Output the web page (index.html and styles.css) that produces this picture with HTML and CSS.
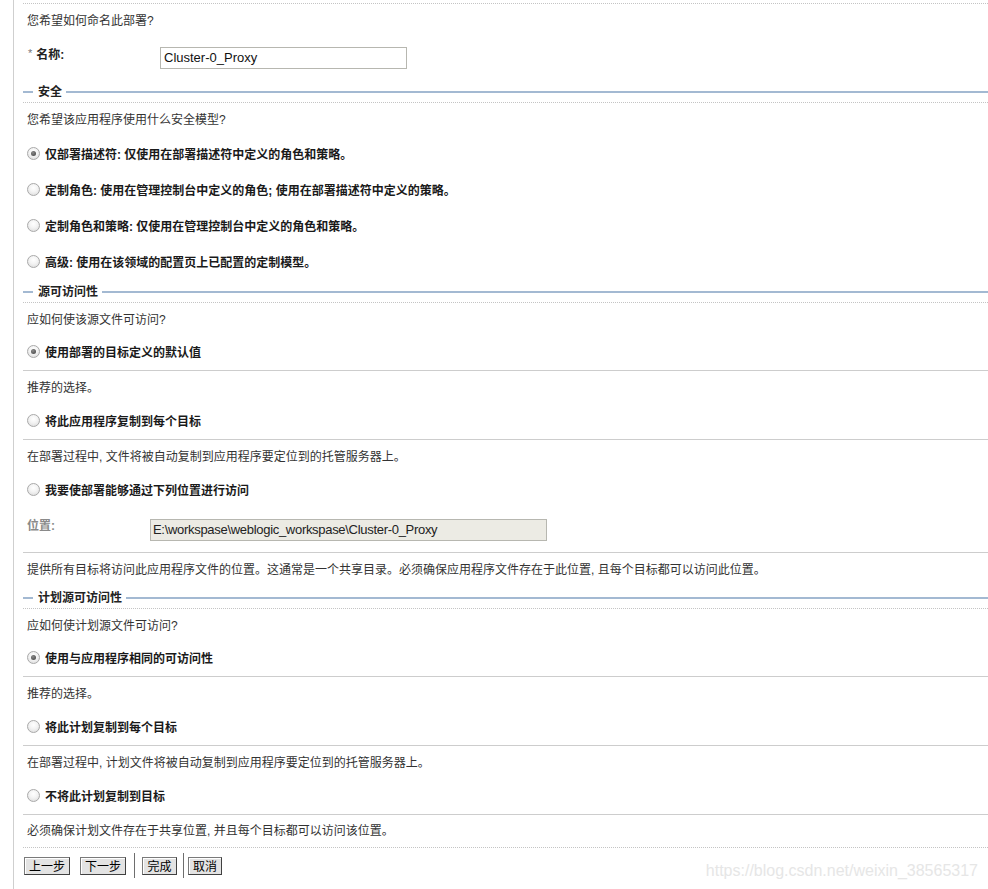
FILE: index.html
```html
<!DOCTYPE html>
<html lang="zh-CN">
<head>
<meta charset="utf-8">
<title>部署</title>
<link rel="stylesheet" href="styles.css">
</head>
<body>
<div class="page">
  <main class="content">
    <div class="q q-first">您希望如何命名此部署?</div>
    <div class="name-row">
      <div class="name-label"><span class="req">*</span><b>名称:</b></div>
      <div class="field field-name">Cluster-0_Proxy</div>
    </div>

    <div class="sec-head"><span class="sec-line sec-line-short"></span><span class="sec-title">安全</span><span class="sec-line sec-line-long"></span></div>
    <div class="q q-sec">您希望该应用程序使用什么安全模型?</div>
    <div class="opt opt-sec"><span class="radio checked"></span><span class="opt-label">仅部署描述符: 仅使用在部署描述符中定义的角色和策略。</span></div>
    <div class="opt opt-sec"><span class="radio"></span><span class="opt-label">定制角色: 使用在管理控制台中定义的角色; 使用在部署描述符中定义的策略。</span></div>
    <div class="opt opt-sec"><span class="radio"></span><span class="opt-label">定制角色和策略: 仅使用在管理控制台中定义的角色和策略。</span></div>
    <div class="opt opt-sec"><span class="radio"></span><span class="opt-label">高级: 使用在该领域的配置页上已配置的定制模型。</span></div>

    <div class="sec-head"><span class="sec-line sec-line-short"></span><span class="sec-title">源可访问性</span><span class="sec-line sec-line-long"></span></div>
    <div class="q q-short">应如何使该源文件可访问?</div>
    <div class="opt opt-ruled"><span class="radio checked"></span><span class="opt-label">使用部署的目标定义的默认值</span></div>
    <div class="note">推荐的选择。</div>
    <div class="opt opt-ruled"><span class="radio"></span><span class="opt-label">将此应用程序复制到每个目标</span></div>
    <div class="note">在部署过程中, 文件将被自动复制到应用程序要定位到的托管服务器上。</div>
    <div class="opt"><span class="radio"></span><span class="opt-label">我要使部署能够通过下列位置进行访问</span></div>
    <div class="loc-row">
      <div class="loc-label">位置:</div>
      <div class="field field-loc">E:\workspase\weblogic_workspase\Cluster-0_Proxy</div>
    </div>
    <div class="note">提供所有目标将访问此应用程序文件的位置。这通常是一个共享目录。必须确保应用程序文件存在于此位置, 且每个目标都可以访问此位置。</div>

    <div class="sec-head"><span class="sec-line sec-line-short"></span><span class="sec-title">计划源可访问性</span><span class="sec-line sec-line-long"></span></div>
    <div class="q q-short">应如何使计划源文件可访问?</div>
    <div class="opt opt-ruled"><span class="radio checked"></span><span class="opt-label">使用与应用程序相同的可访问性</span></div>
    <div class="note">推荐的选择。</div>
    <div class="opt opt-ruled"><span class="radio"></span><span class="opt-label">将此计划复制到每个目标</span></div>
    <div class="note">在部署过程中, 计划文件将被自动复制到应用程序要定位到的托管服务器上。</div>
    <div class="opt opt-ruled"><span class="radio"></span><span class="opt-label">不将此计划复制到目标</span></div>
    <div class="note note-last">必须确保计划文件存在于共享位置, 并且每个目标都可以访问该位置。</div>

    <div class="btn-bar">
      <span class="btn btn-wide">上一步</span>
      <span class="btn btn-wide btn-next">下一步</span>
      <span class="btn-sep"></span>
      <span class="btn btn-narrow">完成</span>
      <span class="btn-sep btn-sep-2"></span>
      <span class="btn btn-narrow btn-cancel">取消</span>
    </div>
  </main>
  <div class="watermark">https://blog.csdn.net/weixin_38565317</div>
</div>
</body>
</html>
```

FILE: styles.css
```css
html, body {
  margin: 0;
  padding: 0;
  background: #fff;
}

body {
  font-family: "Liberation Sans", "Noto Sans CJK SC", sans-serif;
  font-size: 12px;
  color: #333;
}

.page {
  position: relative;
  margin-left: 13px;
  border-left: 1px solid #cfcfcf;
  min-height: 889px;
  box-sizing: border-box;
  padding-left: 9px;
}

.content {
  padding-top: 3px;
}

.q {
  display: flex;
  align-items: center;
  padding-left: 4px;
  height: 31px;
  padding-bottom: 3px;
}

.q-first {
  border-top: 1px dotted #c4c4c4;
  height: 30px;
  padding-bottom: 2px;
}

.q-short {
  height: 30px;
}

.name-row {
  display: flex;
  align-items: flex-start;
  height: 45px;
  box-sizing: border-box;
  padding-top: 11px;
  padding-left: 5px;
}

.name-label {
  width: 132px;
  line-height: 16px;
  color: #222;
}

.req {
  color: #777;
  font-size: 11px;
  margin-right: 4px;
  position: relative;
  top: -2px;
}

.name-label b {
  font-weight: bold;
}

.field {
  box-sizing: border-box;
  height: 22px;
  border: 1px solid #b7b7b0;
  padding-left: 3px;
  font-size: 13px;
  line-height: 20px;
  color: #111;
  white-space: nowrap;
}

.field-name {
  width: 247px;
  background: #fff;
}

.field-loc {
  width: 397px;
  background: #ecebe4;
  color: #222;
  letter-spacing: -0.3px;
  padding-left: 2px;
}

.sec-head {
  display: flex;
  align-items: center;
  height: 21px;
  border-bottom: 1px dotted #c4c4c4;
}

.sec-line {
  height: 2px;
  background: #a3b9d2;
}

.sec-line-short {
  width: 10px;
}

.sec-line-long {
  flex: 1;
}

.sec-title {
  padding: 0 4px 0 5px;
  font-weight: bold;
  color: #222;
  line-height: 16px;
}

.opt {
  display: flex;
  align-items: center;
  height: 31px;
  padding-bottom: 3px;
  padding-left: 4px;
}

.opt-sec {
  box-sizing: border-box;
  height: 36px;
  padding-bottom: 4px;
}

.opt-ruled {
  border-bottom: 1px solid #cdcdcd;
}

.opt-label {
  font-weight: bold;
  color: #1a1a1a;
  margin-left: 5px;
}

.radio {
  position: relative;
  width: 13px;
  height: 13px;
  box-sizing: border-box;
  border-radius: 50%;
  border: 1px solid #a9a9a9;
  background: radial-gradient(circle at 50% 35%, #ffffff 0%, #f3f3f3 45%, #d8d8d8 100%);
  flex: none;
}

.radio.checked::after {
  content: "";
  position: absolute;
  left: 3px;
  top: 3px;
  width: 5px;
  height: 5px;
  border-radius: 50%;
  background: radial-gradient(circle at 40% 35%, #8a8a8a 0%, #555 70%, #444 100%);
}

.note {
  display: flex;
  align-items: center;
  height: 31px;
  padding-bottom: 3px;
  padding-left: 4px;
}

.note-last {
  height: 29px;
  border-bottom: 1px dotted #c4c4c4;
}

.loc-row {
  display: flex;
  align-items: center;
  height: 44px;
  border-bottom: 1px solid #cdcdcd;
  padding-left: 4px;
}

.loc-label {
  width: 123px;
  color: #8a8a8a;
  font-weight: bold;
  align-self: flex-start;
  padding-top: 11px;
  line-height: 14px;
}

.btn-bar {
  display: flex;
  align-items: center;
  height: 25px;
  padding-top: 5px;
  padding-left: 1px;
}

.btn {
  box-sizing: border-box;
  height: 18px;
  border: 1px solid #7a7a7a;
  border-right-color: #404040;
  border-bottom-color: #404040;
  box-shadow: inset 1px 1px 0 #fff;
  background: #e3e3e3;
  color: #000;
  font-family: "Noto Sans CJK SC", sans-serif;
  font-size: 12px;
  line-height: 15px;
  text-align: center;
}

.btn-wide {
  width: 46px;
}

.btn-next {
  margin-left: 10px;
}

.btn-narrow {
  width: 35px;
}

.btn-cancel {
  width: 34px;
  margin-left: 4px;
}

.btn-sep {
  width: 1px;
  height: 25px;
  background: #6e6e6e;
  margin: 0 7px 0 8px;
}

.btn-sep-2 {
  margin: 0 0 0 6px;
}

.watermark {
  position: absolute;
  right: 10px;
  top: 861px;
  font-family: "Liberation Sans", sans-serif;
  font-size: 16px;
  color: #e6e6e6;
  line-height: 20px;
}
```
